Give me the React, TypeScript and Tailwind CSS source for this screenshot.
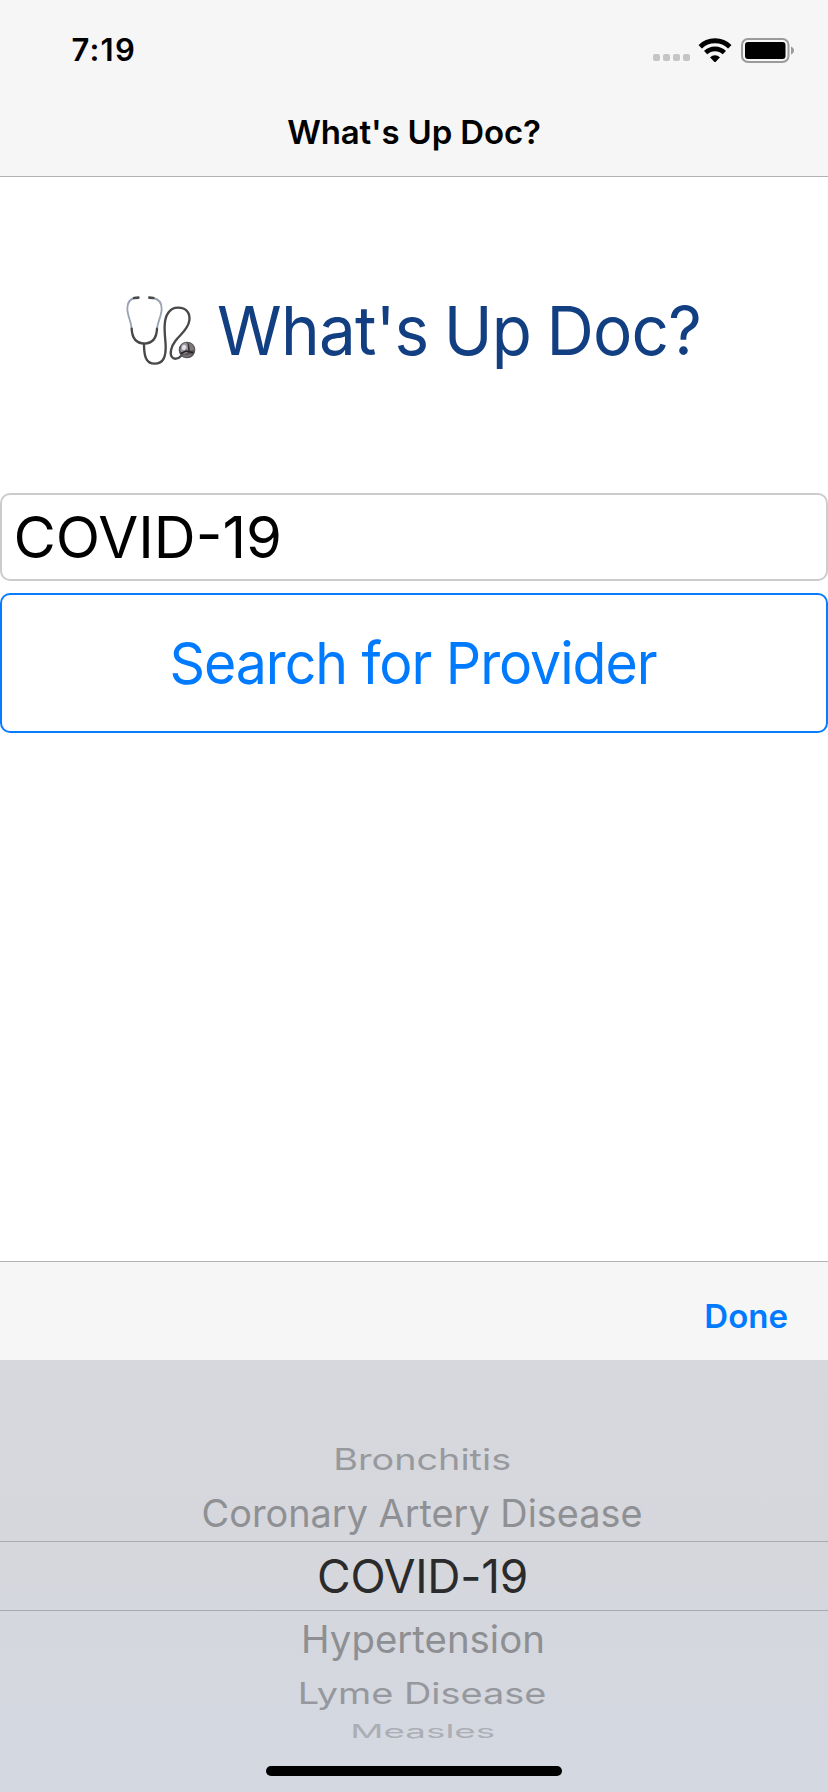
import React from 'react';

function Stethoscope() {
  return (
    <svg className="h-20 w-21 shrink-0" viewBox="0 0 252 240" fill="none" strokeLinecap="round" strokeLinejoin="round">
      <path d="M44 24C30 27 22 36 22 56C22 76 33 92 35 116" stroke="#9aa3b4" strokeWidth="5.5" />
      <path d="M99 24C116 27 125 36 125 56C125 76 114 92 111 116" stroke="#9aa3b4" strokeWidth="5.5" />
      <path d="M42 24L55 23M88 23L100 24" stroke="#4a4a4c" strokeWidth="8" />
      <path d="M35 116C36 142 48 160 73 161C98 160 110 142 111 116" stroke="#48484a" strokeWidth="7" />
      <path
        d="M72 161C72 197 77 221 104 221C131 221 138 199 137 166C136 147 133 127 134 107C135 74 150 53 174 53C199 53 211 69 208 92C204 119 181 133 166 153C153 170 149 190 155 200C161 209 174 208 183 198"
        stroke="#48484a"
        strokeWidth="7"
      />
      <circle cx="201" cy="180" r="25" fill="#59555a" />
      <path d="M184 166C190 156 201 155 205 166L203 185C196 195 184 192 181 181Z" fill="#98929d" />
      <path d="M187 168C192 162 198 164 199 172L194 181L185 178Z" fill="#e3e2ea" />
      <path d="M206 159C216 161 222 169 223 180L209 182Z" fill="#7d767a" />
      <path d="M184 190L199 183L218 188" stroke="#292629" strokeWidth="5" />
      <path d="M191 197C199 200 208 198 213 194" stroke="#918a8e" strokeWidth="3" />
      <path d="M205 164L207 181" stroke="#333034" strokeWidth="4" />
    </svg>
  );
}

function Wifi() {
  return (
    <svg className="h-6 w-8.5" viewBox="0 0 34 24">
      <clipPath id="wifi-wedge">
        <path d="M17 24.6L-9 -3H43Z" />
      </clipPath>
      <g clipPath="url(#wifi-wedge)" fill="none" stroke="#000">
        <circle cx="17" cy="24" r="21.2" strokeWidth="5" />
        <circle cx="17" cy="24" r="13.2" strokeWidth="4.8" />
        <circle cx="17" cy="24" r="3.4" strokeWidth="6.8" />
      </g>
    </svg>
  );
}

function Battery() {
  return (
    <svg className="h-[25px] w-[54px]" viewBox="0 0 54 25">
      <rect x="1" y="1" width="46.5" height="23" rx="6" fill="none" stroke="#9b9b9b" strokeWidth="2" />
      <rect x="4" y="4" width="40.5" height="17" rx="3" fill="#000" />
      <path d="M50 8.5C54 10 54 15 50 16.5Z" fill="#9b9b9b" />
    </svg>
  );
}

const rows = [
  { label: 'Bronchitis', row: 'h-[55px]', text: 'text-[40px] scale-x-[0.945] scale-y-[0.74] text-[#98999d]' },
  { label: 'Coronary Artery Disease', row: 'h-[54px]', text: 'text-[40px] scale-x-[0.946] scale-y-[0.945] text-[#8f9093]' },
  { label: 'COVID-19', row: 'h-[70px] border-y border-[#a9aaaf]', text: 'text-[46px] tracking-[-0.25px] text-[#2b2b2c]' },
  { label: 'Hypertension', row: 'h-14 pt-px', text: 'text-[40px] scale-x-[0.96] scale-y-[0.945] text-[#8e8f93]' },
  { label: 'Lyme Disease', row: 'h-[53px]', text: 'text-[40px] scale-x-[0.948] scale-y-[0.74] text-[#97989d]' },
  { label: 'Measles', row: 'h-[23px]', text: 'text-[40px] scale-x-[0.92] scale-y-[0.45] text-[#acaeb5]' },
];

export default function App() {
  return (
    <div className="flex h-[1792px] w-[828px] flex-col overflow-hidden bg-white font-['Inter',sans-serif] whitespace-nowrap text-black">
      <header className="h-[177px] shrink-0 border-b border-[#b2b2b2] bg-[#f6f6f6]">
        <div className="flex h-[100px] items-center justify-between pr-[33px] pl-[71.5px]">
          <span className="pb-0.5 text-[31px] leading-none font-[580] tracking-[1.2px]">7:19</span>
          <div className="flex items-center">
            <div className="mt-[15px] flex gap-[3px]">
              <span className="size-[7px] rounded-[2px] bg-[#c5c5c5]" />
              <span className="size-[7px] rounded-[2px] bg-[#c5c5c5]" />
              <span className="size-[7px] rounded-[2px] bg-[#c5c5c5]" />
              <span className="size-[7px] rounded-[2px] bg-[#c5c5c5]" />
            </div>
            <div className="mr-[9px] ml-2">
              <Wifi />
            </div>
            <Battery />
          </div>
        </div>
        <h1 className="flex h-16 items-center justify-center text-[33px] leading-none font-[580] tracking-[-0.15px]">
          What's Up Doc?
        </h1>
      </header>

      <main className="flex flex-1 flex-col">
        <div className="flex h-[306px] items-center pl-[120px]">
          <Stethoscope />
          <span className="ml-[13px] origin-left scale-x-[0.965] text-[68px] leading-none tracking-[-0.8px] [word-spacing:-2.5px] text-[#123e82]">
            What's Up Doc?
          </span>
        </div>
        <div className="mt-2.5 flex h-[88px] items-center rounded-[10px] border-2 border-[#cccccc] pl-[11.5px] text-[58px] leading-none">
          COVID-19
        </div>
        <button className="mt-3 flex h-[140px] items-center justify-center rounded-[10px] border-2 border-[#087cff] pr-0.5 text-[58px] leading-none text-[#007aff]">
          <span className="scale-x-[0.955] tracking-[-1.1px]">Search for Provider</span>
        </button>
      </main>

      <div className="flex h-[99px] shrink-0 items-center justify-end border-t border-[#b2b2b2] bg-[#f6f6f6] pt-2.5 pr-10 text-[33px] leading-none font-[570] text-[#007aff]">
        Done
      </div>

      <section className="flex h-[432px] shrink-0 flex-col bg-linear-to-b from-[#d7d8dd] via-[#d5d7dd] to-[#d4d8e1] pt-[72px]">
        {rows.map(({ label, row, text }) => (
          <div key={label} className={`flex shrink-0 items-center justify-center pl-[17px] leading-none ${row}`}>
            <span className={text}>{label}</span>
          </div>
        ))}
        <div className="mt-[23px] h-2.5 w-[296px] shrink-0 self-center rounded-full bg-black" />
      </section>
    </div>
  );
}
